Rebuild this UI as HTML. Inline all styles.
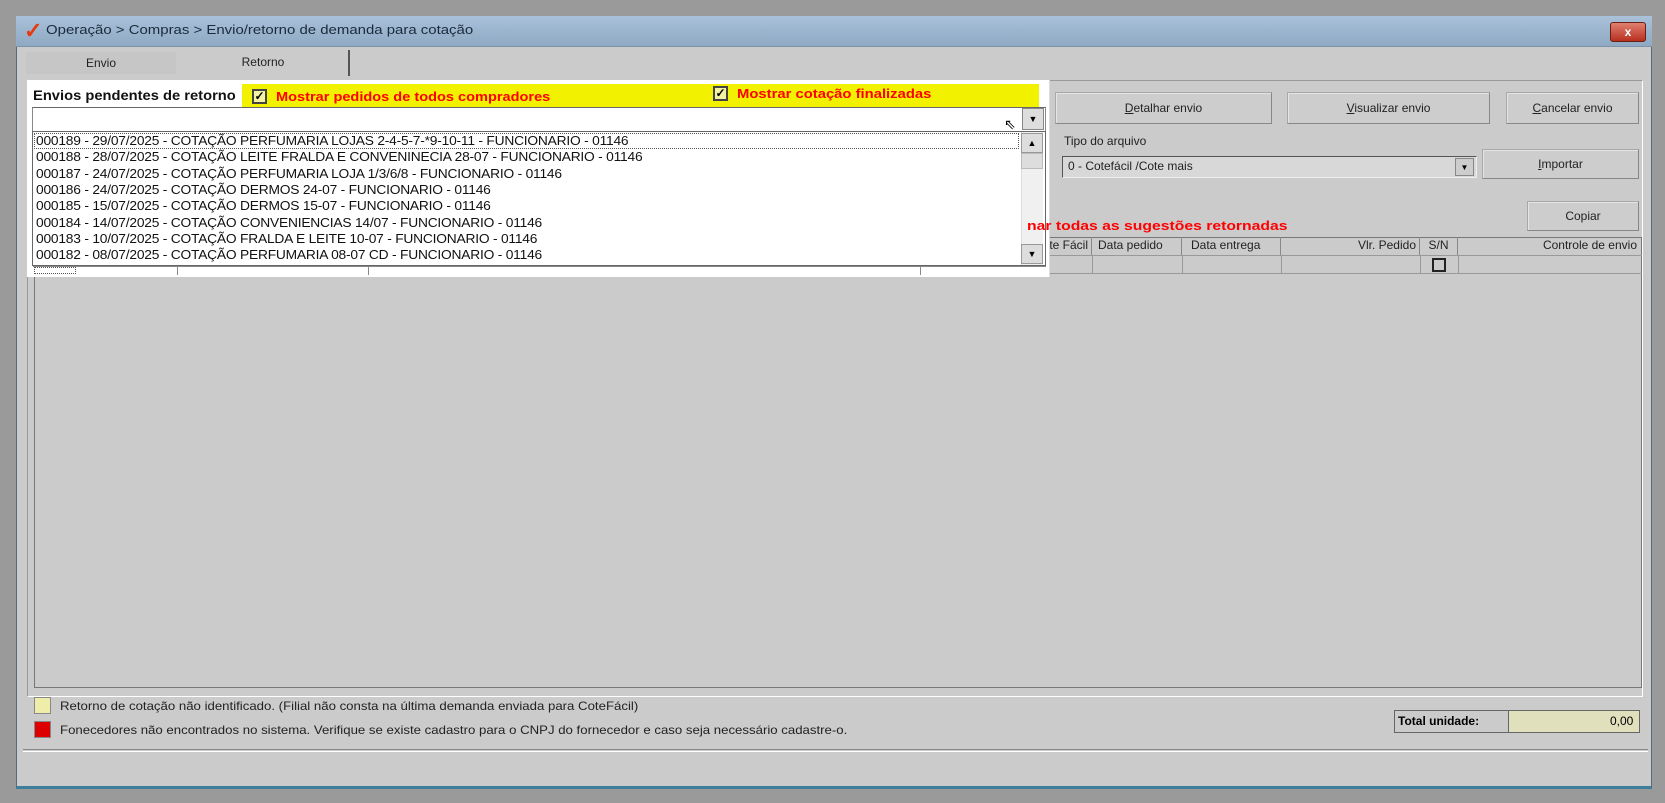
<!DOCTYPE html>
<html><head><meta charset="utf-8"><style>
*{margin:0;padding:0;box-sizing:border-box}
body{width:1665px;height:803px;background:#9a9a9a;font-family:"Liberation Sans",sans-serif;font-size:12px;color:#000;position:relative;overflow:hidden}
.a{position:absolute}
.win{left:16px;top:16px;width:1636px;height:773px;background:#cbcbcb;border:1px solid #5a6a7a;border-bottom:3px solid #3d7f9a}
.title{left:16px;top:16px;width:1636px;height:31px;background:linear-gradient(#a9c1d9,#8fa9c4);border-bottom:1px solid #7f93a8}
.btn{position:absolute;background:#cdcdcd;border:1px solid #a8a8a8;border-right-color:#888;border-bottom-color:#888;box-shadow:inset 1px 1px 0 #e4e4e4;text-align:center;font-size:12px;color:#222}
.row{position:absolute;left:36px;font-size:13px;letter-spacing:-0.2px;color:#111;white-space:nowrap;transform:scaleX(1.06);transform-origin:left}
.red{color:#f00;font-weight:bold;font-size:13px;white-space:nowrap;transform-origin:left}
.cb{position:absolute;width:15px;height:15px;border:2px solid #444;background:#f2f2a0;font-size:12px;line-height:11px;text-align:center;font-weight:bold}
.hd{position:absolute;top:237px;height:18px;border-right:1px solid #888;font-size:12px;line-height:17px;text-align:right;padding-right:3px;color:#222}
</style></head><body>
<div class="a win"></div>
<div class="a title"></div>
<div class="a" style="left:24px;top:20px;color:#e63a10;font-size:22px;font-weight:bold;line-height:22px">✓</div>
<div class="a" style="left:46px;top:22px;font-size:13px;color:#1a2a3a;white-space:nowrap;transform:scaleX(1.15);transform-origin:left">Operação &gt; Compras &gt; Envio/retorno de demanda para cotação</div>
<div class="a" style="left:1610px;top:22px;width:36px;height:20px;background:linear-gradient(#e08070,#b83020);border:1px solid #6a2010;border-radius:3px;color:#fff;text-align:center;font-weight:bold;line-height:18px">x</div>
<!-- tabs -->
<div class="a" style="left:26px;top:52px;width:150px;height:22px;background:#c6c6c6;text-align:center;line-height:22px;color:#222">Envio</div>
<div class="a" style="left:176px;top:50px;width:174px;height:24px;text-align:center;line-height:24px;color:#222">Retorno</div>
<div class="a" style="left:348px;top:50px;width:2px;height:26px;background:#555"></div>
<!-- panel border -->
<div class="a" style="left:27px;top:80px;width:1616px;height:617px;border:1px solid #999;border-right-color:#fff;border-bottom-color:#fff"></div>
<!-- grid -->
<div class="a" style="left:34px;top:237px;width:1608px;height:451px;border:1px solid #777;background:#cbcbcb"></div>
<div class="a" style="left:34px;top:255px;width:1608px;height:19px;border-bottom:1px solid #999;border-top:1px solid #999"></div>
<div class="hd" style="left:1000px;width:92px">ote Fácil</div>
<div class="hd" style="left:1092px;width:90px;text-align:left;padding-left:6px">Data pedido</div>
<div class="hd" style="left:1182px;width:99px;text-align:left;padding-left:9px">Data entrega</div>
<div class="hd" style="left:1281px;width:139px">Vlr. Pedido</div>
<div class="hd" style="left:1420px;width:38px;text-align:center;padding:0">S/N</div>
<div class="hd" style="left:1458px;width:182px;border-right:none">Controle de envio</div>
<div class="a" style="left:1092px;top:255px;height:19px;border-left:1px solid #999"></div>
<div class="a" style="left:1182px;top:255px;height:19px;border-left:1px solid #999"></div>
<div class="a" style="left:1281px;top:255px;height:19px;border-left:1px solid #999"></div>
<div class="a" style="left:1420px;top:255px;height:19px;border-left:1px solid #999"></div>
<div class="a" style="left:1458px;top:255px;height:19px;border-left:1px solid #999"></div>
<div class="a" style="left:1432px;top:258px;width:14px;height:14px;border:2px solid #222"></div>
<!-- buttons -->
<div class="btn" style="left:1055px;top:92px;width:217px;height:32px;line-height:30px"><u>D</u>etalhar envio</div>
<div class="btn" style="left:1287px;top:92px;width:203px;height:32px;line-height:30px"><u>V</u>isualizar envio</div>
<div class="btn" style="left:1506px;top:92px;width:133px;height:32px;line-height:30px"><u>C</u>ancelar envio</div>
<div class="a" style="left:1064px;top:134px;color:#222">Tipo do arquivo</div>
<div class="a" style="left:1062px;top:156px;width:415px;height:22px;background:#d8d8d8;border:1px solid #555;border-right-color:#eee;border-bottom-color:#eee;line-height:19px;padding-left:5px;color:#222">0 - Cotefácil /Cote mais</div>
<div class="a" style="left:1455px;top:158px;width:19px;height:18px;background:#cdcdcd;border:1px solid #888;text-align:center;font-size:8px;line-height:17px">▼</div>
<div class="btn" style="left:1482px;top:149px;width:157px;height:30px;line-height:28px"><u>I</u>mportar</div>
<div class="btn" style="left:1527px;top:201px;width:112px;height:30px;line-height:28px">Copiar</div>
<!-- popup -->
<div class="a" style="left:27px;top:80px;width:1023px;height:197px;background:#fff;border-right:1px solid #ddd"></div>
<div class="a" style="left:242px;top:84px;width:797px;height:25px;background:#f2f200"></div>
<div class="a" style="left:33px;top:88px;font-size:13.5px;font-weight:bold;color:#111;white-space:nowrap;transform:scaleX(1.09);transform-origin:left">Envios pendentes de retorno</div>
<div class="cb" style="left:252px;top:89px">✓</div>
<div class="a red" style="left:276px;top:89px;transform:scaleX(1.12)">Mostrar pedidos de todos compradores</div>
<div class="cb" style="left:713px;top:86px">✓</div>
<div class="a red" style="left:737px;top:86px;transform:scaleX(1.14)">Mostrar cotação finalizadas</div>
<div class="a" style="left:32px;top:107px;width:1014px;height:25px;border:1px solid #888;border-top-color:#666;background:#fff"></div>
<div class="a" style="left:1022px;top:108px;width:22px;height:22px;background:#ddd;border:1px solid #888;text-align:center;font-size:9px;line-height:20px">▼</div>
<div class="a" style="left:1004px;top:116px;font-size:14px">⇖</div>
<div class="a" style="left:32px;top:131px;width:1014px;height:135px;border:1px solid #666;background:#fff"></div>
<div class="a" style="left:1021px;top:132px;width:22px;height:133px;background:#f0f0f0;border-left:1px solid #ddd"></div>
<div class="a" style="left:1021px;top:133px;width:22px;height:20px;background:#ddd;border:1px solid #999;font-size:9px;text-align:center;line-height:18px">▲</div>
<div class="a" style="left:1021px;top:153px;width:22px;height:16px;background:#ddd;border:1px solid #bbb"></div>
<div class="a" style="left:1021px;top:244px;width:22px;height:20px;background:#ddd;border:1px solid #999;font-size:9px;text-align:center;line-height:18px">▼</div>
<div class="a" style="left:34px;top:133px;width:985px;height:16px;border:1px dotted #555"></div>
<div class="row" style="top:133px">000189 - 29/07/2025 - COTAÇÃO PERFUMARIA LOJAS 2-4-5-7-*9-10-11 - FUNCIONARIO - 01146</div>
<div class="row" style="top:149px">000188 - 28/07/2025 - COTAÇÃO LEITE FRALDA E CONVENINECIA 28-07 - FUNCIONARIO - 01146</div>
<div class="row" style="top:166px">000187 - 24/07/2025 - COTAÇÃO PERFUMARIA LOJA 1/3/6/8 - FUNCIONARIO - 01146</div>
<div class="row" style="top:182px">000186 - 24/07/2025 - COTAÇÃO DERMOS 24-07 - FUNCIONARIO - 01146</div>
<div class="row" style="top:198px">000185 - 15/07/2025 - COTAÇÃO DERMOS 15-07 - FUNCIONARIO - 01146</div>
<div class="row" style="top:215px">000184 - 14/07/2025 - COTAÇÃO CONVENIENCIAS 14/07 - FUNCIONARIO - 01146</div>
<div class="row" style="top:231px">000183 - 10/07/2025 - COTAÇÃO FRALDA E LEITE 10-07 - FUNCIONARIO - 01146</div>
<div class="row" style="top:247px">000182 - 08/07/2025 - COTAÇÃO PERFUMARIA 08-07 CD - FUNCIONARIO - 01146</div>
<div class="a red" style="left:1027px;top:218px;transform:scaleX(1.21);z-index:5">nar todas as sugestões retornadas</div>
<div class="a" style="left:33px;top:266px;width:1013px;height:9px;border-top:1px solid #888"></div>
<div class="a" style="left:34px;top:267px;width:42px;height:7px;border:1px dotted #555"></div>
<div class="a" style="left:177px;top:266px;height:9px;border-left:1px solid #888"></div>
<div class="a" style="left:368px;top:266px;height:9px;border-left:1px solid #888"></div>
<div class="a" style="left:920px;top:266px;height:9px;border-left:1px solid #888"></div>
<!-- legend -->
<div class="a" style="left:34px;top:697px;width:17px;height:17px;background:#eeeeaa;border:1px solid #888"></div>
<div class="a" style="left:60px;top:699px;font-size:12px;color:#222;transform:scaleX(1.1);transform-origin:left;white-space:nowrap">Retorno de cotação não identificado. (Filial não consta na última demanda enviada para CoteFácil)</div>
<div class="a" style="left:34px;top:721px;width:17px;height:17px;background:#dd0000;border:1px solid #888"></div>
<div class="a" style="left:60px;top:723px;font-size:12px;color:#222;transform:scaleX(1.1);transform-origin:left;white-space:nowrap">Fonecedores não encontrados no sistema. Verifique se existe cadastro para o CNPJ do fornecedor e caso seja necessário cadastre-o.</div>
<div class="a" style="left:1394px;top:710px;width:246px;height:23px;border:1px solid #666;background:#e0e0bc"></div>
<div class="a" style="left:1395px;top:711px;width:114px;height:21px;background:#cbcbcb;border-right:1px solid #666;font-weight:bold;font-size:12px;line-height:20px;padding-left:3px">Total unidade:</div>
<div class="a" style="left:1610px;top:714px;font-size:12px">0,00</div>
<div class="a" style="left:23px;top:749px;width:1625px;height:3px;border-top:1px solid #888;border-bottom:1px solid #fff"></div>
</body></html>
